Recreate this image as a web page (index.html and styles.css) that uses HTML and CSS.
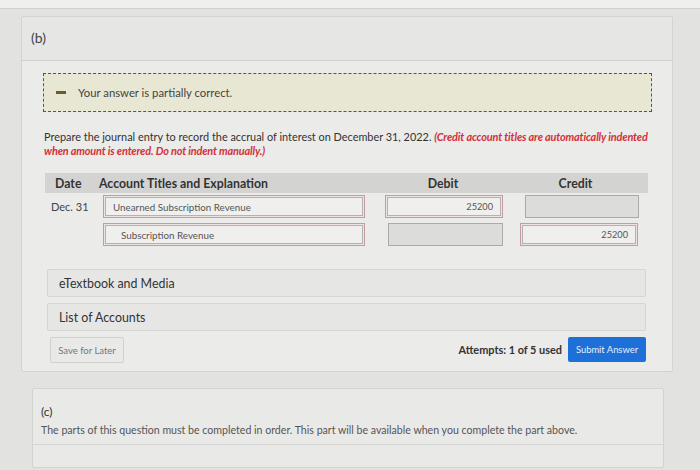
FILE: index.html
```html
<!DOCTYPE html>
<html>
<head>
<meta charset="utf-8">
<link rel="stylesheet" href="styles.css">
</head>
<body>
<div class="topstrip"></div>
<div class="card card-b">
  <div class="card-head">(b)</div>
  <div class="card-body">
    <div class="feedback">
      <span class="minus"></span>
      <span class="fb-text">Your answer is partially correct.</span>
    </div>
    <p class="prompt">Prepare the journal entry to record the accrual of interest on December 31, 2022. <em class="note">(Credit account titles are automatically indented when amount is entered. Do not indent manually.)</em></p>
    <div class="jtable">
      <div class="jhead">
        <span class="h-date">Date</span>
        <span class="h-acct">Account Titles and Explanation</span>
        <span class="h-debit">Debit</span>
        <span class="h-credit">Credit</span>
      </div>
      <div class="jrow">
        <span class="date">Dec. 31</span>
        <div class="inp acct red">Unearned Subscription Revenue</div>
        <div class="inp num red debit">25200</div>
        <div class="inp num empty credit"></div>
      </div>
      <div class="jrow">
        <span class="date"></span>
        <div class="inp acct red indent">Subscription Revenue</div>
        <div class="inp num empty debit2"></div>
        <div class="inp num red credit2">25200</div>
      </div>
    </div>
    <div class="bar bar-first">eTextbook and Media</div>
    <div class="bar">List of Accounts</div>
    <div class="actions">
      <button class="save">Save for Later</button>
      <div class="right">
        <span class="attempts">Attempts: 1 of 5 used</span>
        <button class="submit">Submit Answer</button>
      </div>
    </div>
  </div>
</div>
<div class="card card-c">
  <div class="c-body">
    <div class="c-title">(c)</div>
    <div class="c-text">The parts of this question must be completed in order. This part will be available when you complete the part above.</div>
  </div>
  <div class="c-foot"></div>
</div>
</body>
</html>
```
FILE: styles.css
```css
* { box-sizing: border-box; }
html, body { margin: 0; padding: 0; }
body {
  width: 700px;
  height: 470px;
  overflow: hidden;
  background: #e2e2e0;
  font-family: Lato, "Open Sans", sans-serif;
  color: #333;
}
.topstrip {
  height: 9px;
  background: #efefed;
  border-bottom: 1px solid #cfcfcd;
}
.card {
  border: 1px solid #d3d3d1;
  border-radius: 2px;
}
.card-b {
  margin: 7px 0 0 21px;
  width: 652px;
  background: #ebebe9;
}
.card-head {
  height: 44px;
  padding: 12px 0 0 9px;
  font-size: 14px;
  color: #444;
  background: #e6e6e4;
  border-bottom: 1px solid #d1d1cf;
}
.card-body {
  padding: 12px 20px 8px 21px;
}
.feedback {
  height: 39px;
  display: flex;
  align-items: center;
  background: #e8e7d3;
  border: 1px dashed #555;
  padding-left: 12px;
}
.minus {
  width: 10px;
  height: 3px;
  background: #6a5a35;
  margin-right: 12px;
}
.fb-text {
  font-size: 11.3px;
  color: #444;
}
.prompt {
  margin: 18px 0 0 1px;
  font-size: 10.9px;
  line-height: 14px;
  color: #333;
  width: 610px;
}
.note {
  color: #d4303a;
  font-weight: 700;
  font-style: italic;
  letter-spacing: -0.15px;
}
.jtable {
  margin: 15px 0 0 2px;
  width: 603px;
}
.jhead {
  height: 20px;
  background: #d3d3d1;
  display: flex;
  align-items: center;
  font-size: 12.3px;
  font-weight: 700;
  color: #333;
}
.h-date { width: 54px; padding-left: 10px; }
.h-acct { width: 300px; }
.h-debit { width: 120px; text-align: center; margin-left: -16px; }
.h-credit { width: 145px; text-align: center; }
.jrow {
  display: flex;
  align-items: center;
  height: 23px;
  margin-top: 2px;
}
.jrow + .jrow { margin-top: 5px; }
.date {
  width: 58px;
  padding-left: 6px;
  font-size: 11px;
  color: #444;
}
.inp {
  height: 23px;
  font-size: 9.8px;
  color: #555;
  display: flex;
  align-items: center;
}
.red {
  background: #efefed;
  border: 1px solid #c29c9f;
  box-shadow: inset 0 0 0 1px #eee3e3, inset 0 0 0 2px #b4b2b0;
}
.empty {
  background: #dcdcda;
  border: 1px solid #a7aca9;
}
.acct { width: 262px; padding-left: 9px; }
.acct.indent { padding-left: 17px; }
.num { justify-content: flex-end; padding-right: 9px; font-size: 9.2px; }
.debit { width: 118px; margin-left: 20px; }
.credit { width: 114px; margin-left: 22px; }
.debit2 { width: 115px; margin-left: 23px; }
.credit2 { width: 118px; margin-left: 17px; }
.bar {
  height: 28px;
  margin: 6px 0 0 4px;
  width: 599px;
  background: #e6e6e4;
  border: 1px solid #d5d5d3;
  border-radius: 2px;
  font-size: 12.4px;
  color: #333;
  display: flex;
  align-items: center;
  padding-left: 11px;
}
.bar-first { margin-top: 23px; }
.actions {
  display: flex;
  justify-content: space-between;
  align-items: center;
  margin: 4px 0 0 7px;
  width: 596px;
}
.save {
  width: 74px;
  height: 26px;
  margin-top: 2px;
  font-family: Lato, sans-serif;
  font-size: 9.5px;
  color: #777;
  background: #e9e9e7;
  border: 1px solid #d0d0ce;
  border-radius: 2px;
  padding: 0;
}
.right { display: flex; align-items: center; }
.attempts {
  font-size: 10.9px;
  font-weight: 700;
  color: #333;
  margin-right: 6px;
}
.submit {
  width: 78px;
  height: 25px;
  background: #1c70d8;
  color: #e8f0fb;
  border: none;
  border-radius: 2px;
  font-family: Lato, sans-serif;
  font-size: 9.4px;
  padding: 0;
}
.card-c {
  margin: 16px 0 0 32px;
  width: 632px;
  background: #e9e9e7;
}
.c-body {
  padding: 15px 0 0 8px;
  height: 56px;
  border-bottom: 1px solid #d4d4d2;
}
.c-title {
  font-size: 12px;
  color: #333;
}
.c-text {
  margin-top: 5px;
  font-size: 10.6px;
  color: #555;
}
.c-foot { height: 22px; }
```
